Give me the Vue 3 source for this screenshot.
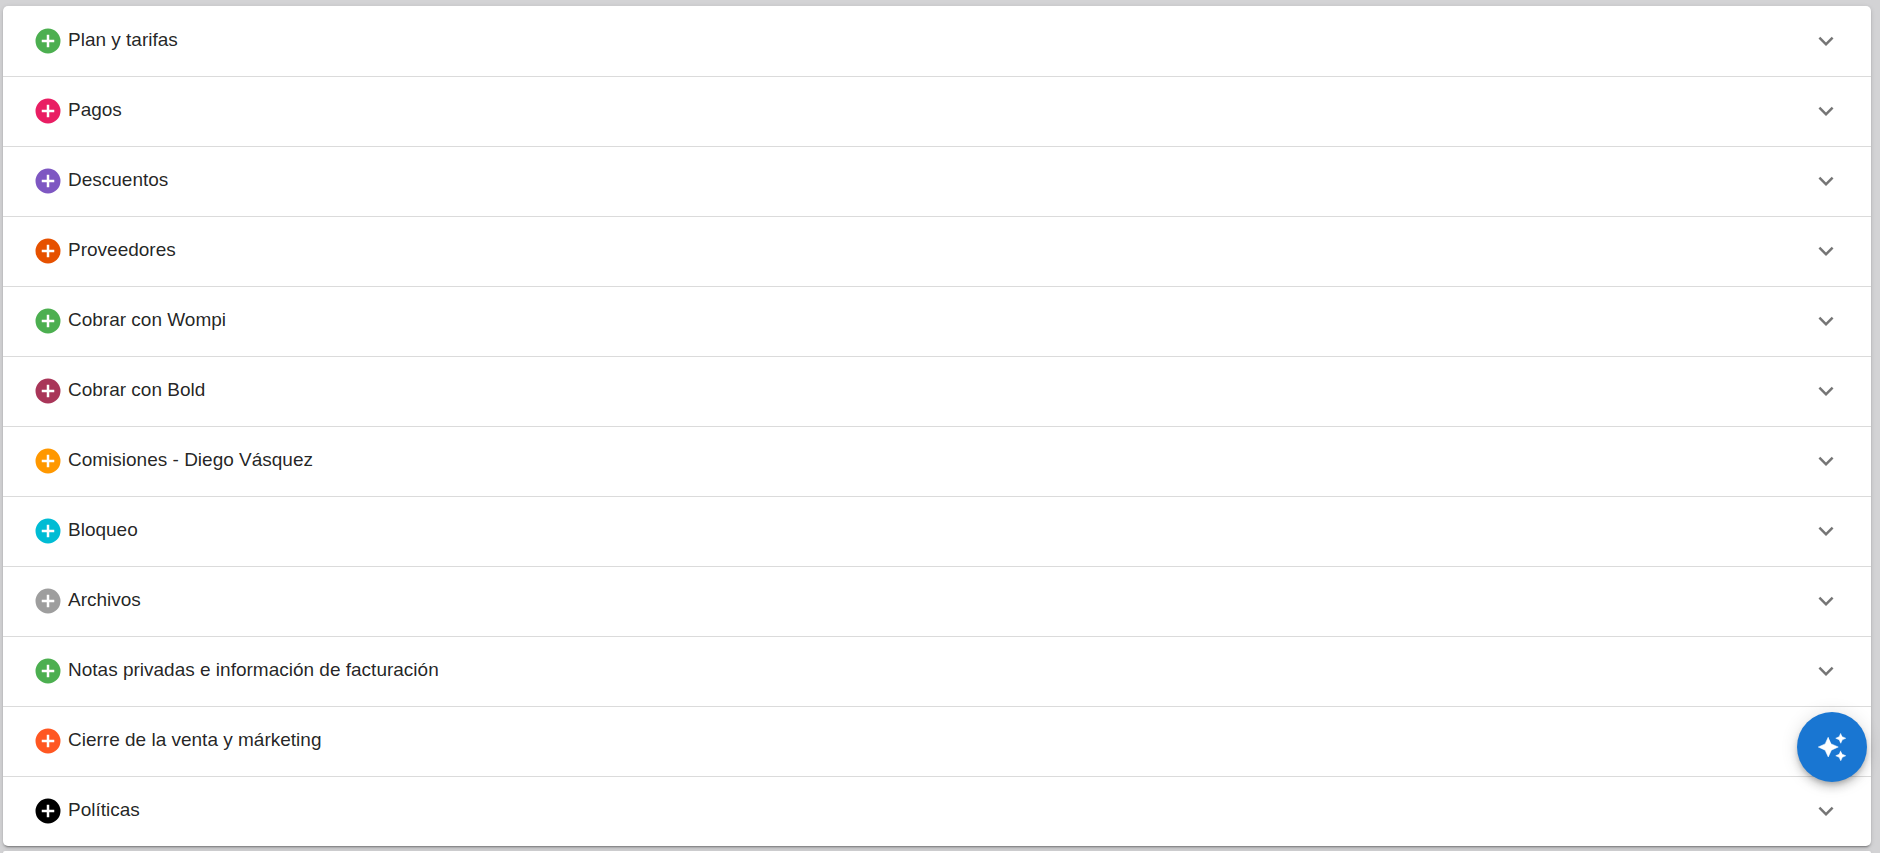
<script setup>
import { ref } from 'vue'

const panels = ref([
  { title: 'Plan y tarifas', color: '#4caf50' },
  { title: 'Pagos', color: '#e91e63' },
  { title: 'Descuentos', color: '#7e57c2' },
  { title: 'Proveedores', color: '#e65100' },
  { title: 'Cobrar con Wompi', color: '#4caf50' },
  { title: 'Cobrar con Bold', color: '#a93659' },
  { title: 'Comisiones - Diego Vásquez', color: '#ff9800' },
  { title: 'Bloqueo', color: '#00bcd4' },
  { title: 'Archivos', color: '#9e9e9e' },
  { title: 'Notas privadas e información de facturación', color: '#4caf50' },
  { title: 'Cierre de la venta y márketing', color: '#ff5722' },
  { title: 'Políticas', color: '#000000' }
])
</script>

<template>
  <main class="page">
    <section class="panels">
      <button v-for="panel in panels" :key="panel.title" type="button" class="panel-header">
        <svg class="icon-plus" viewBox="0 0 24 24" :style="{ color: panel.color }" aria-hidden="true">
          <path d="M17,13H13V17H11V13H7V11H11V7H13V11H17M12,2A10,10 0 0,0 2,12A10,10 0 0,0 12,22A10,10 0 0,0 22,12A10,10 0 0,0 12,2Z" />
        </svg>
        <span class="title">{{ panel.title }}</span>
        <svg class="icon-chevron" viewBox="0 0 24 24" aria-hidden="true">
          <path d="M7.41,8.58L12,13.17L16.59,8.58L18,10L12,16L6,10L7.41,8.58Z" />
        </svg>
      </button>
    </section>

    <section class="panels next"></section>

    <button type="button" class="fab" aria-label="Asistente">
      <svg class="icon-spark" viewBox="0 0 24 24" aria-hidden="true">
        <path d="M19,1L17.74,3.75L15,5L17.74,6.26L19,9L20.25,6.26L23,5L20.25,3.75M9,4L6.5,9.5L1,12L6.5,14.5L9,20L11.5,14.5L17,12L11.5,9.5M19,15L17.74,17.74L15,19L17.74,20.25L19,23L20.25,20.25L23,19L20.25,17.74" />
      </svg>
    </button>
  </main>
</template>

<style>
body {
  background: #d3d3d5;
}
</style>

<style scoped>
.page {
  display: flex;
  flex-direction: column;
  gap: 5px;
  box-sizing: border-box;
  min-height: 100vh;
  padding: 6px 9px 0 3px;
  font-family: Arial, "Liberation Sans", sans-serif;
}

.panels {
  display: flex;
  flex-direction: column;
  background: #fff;
  border-radius: 5px;
  box-shadow:
    0 3px 1px -2px rgba(0, 0, 0, 0.2),
    0 2px 2px 0 rgba(0, 0, 0, 0.14),
    0 1px 5px 0 rgba(0, 0, 0, 0.12);
}

.next {
  flex: 1;
  border-radius: 5px 5px 0 0;
}

.panel-header {
  display: flex;
  align-items: center;
  min-height: 70px;
  padding: 0 30px;
  border: none;
  background: transparent;
  color: rgba(0, 0, 0, 0.87);
  font-family: inherit;
  font-size: 19px;
  line-height: 20px;
  text-align: left;
  cursor: pointer;
}

.panel-header + .panel-header {
  box-shadow: inset 0 1px 0 rgba(0, 0, 0, 0.14);
}

.icon-plus {
  flex: none;
  width: 30px;
  height: 30px;
  margin-right: 5px;
  fill: currentColor;
}

.title {
  flex: 1;
  padding-bottom: 2px;
}

.icon-chevron {
  flex: none;
  width: 30px;
  height: 30px;
  fill: rgba(0, 0, 0, 0.54);
}

.fab {
  position: fixed;
  right: 13px;
  bottom: 71px;
  display: flex;
  align-items: center;
  justify-content: center;
  width: 70px;
  height: 70px;
  padding: 0;
  border: none;
  border-radius: 50%;
  background: #1976d2;
  box-shadow:
    0 3px 5px -1px rgba(0, 0, 0, 0.2),
    0 6px 10px 0 rgba(0, 0, 0, 0.14),
    0 1px 18px 0 rgba(0, 0, 0, 0.12);
  cursor: pointer;
}

.icon-spark {
  width: 30px;
  height: 30px;
  fill: #fff;
  stroke: #fff;
  stroke-width: 0.4;
}
</style>
